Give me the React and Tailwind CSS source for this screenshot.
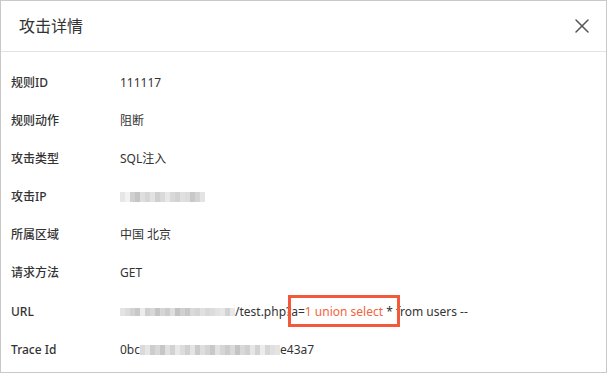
import React from 'react';
import { X } from 'lucide-react';

const font = { fontFamily: '"Noto Sans", "Noto Sans CJK SC", sans-serif' };

// pixelated blur blocks standing in for masked values
const Blur = ({ shades, h = 'h-[9px]', w = 'w-[5px]' }) => (
  <span className="inline-flex align-middle">
    {shades.map((s, i) => (
      <span key={i} className={`${w} ${h} inline-block`} style={{ backgroundColor: s }} />
    ))}
  </span>
);

const ipShades = ['#e6e6e6', '#f2f2f2', '#d0d0d0', '#c4c4c4', '#dedede', '#d6d6d6', '#e2e2e2', '#cfcfcf', '#dadada', '#e8e8e8', '#d8d8d8', '#d2d2d2', '#e0e0e0', '#dcdcdc', '#c8c8c8', '#d4d4d4', '#e4e4e4'];
const urlShades = ['#e4e4e4', '#dcdcdc', '#d2d2d2', '#c8c8c8', '#ececec', '#cfcfcf', '#d8d8d8', '#c4c4c4', '#d6d6d6', '#cccccc', '#dedede', '#c2c2c2', '#d0d0d0', '#c6c6c6', '#dadada', '#d4d4d4', '#e0e0e0', '#d8d8d8', '#dcdcdc', '#e2e2e2', '#e6e6e6', '#d2d2d2', '#e8e8e8'];
const traceShades = ['#dadada', '#e6e6e6', '#cdcdcd', '#d8d8d8', '#c6c6c6', '#e0e0e0', '#d2d2d2', '#e8e8e8', '#dcdcdc', '#d0d0d0', '#e4e4e4', '#cacaca', '#dedede', '#d4d4d4', '#c8c8c8', '#e2e2e2', '#d6d6d6', '#cccccc', '#dadada', '#c4c4c4', '#d8d8d8', '#cfcfcf', '#e6e6e6', '#d2d2d2', '#ececec', '#d6d6d6', '#e0e0e0', '#e4e4e4'];

const Row = ({ label, children, h = 'h-[38px]' }) => (
  <div className={`flex items-center ${h}`}>
    <div className="w-[109px] shrink-0 font-medium text-[#333]">{label}</div>
    <div className="text-[#333] flex items-center whitespace-nowrap">{children}</div>
  </div>
);

export default function App() {
  return (
    <div className="w-[607px] h-[375px] bg-white text-[12px]" style={font}>
      <div className="h-[373px] border border-[#c9c9c9] flex flex-col">
        {/* Header */}
        <div className="h-[51px] shrink-0 border-b border-[#e3e3e3] flex items-center justify-between pl-[18px] pr-[12px]">
          <span className="text-[16px] text-[#333]">攻击详情</span>
          <X className="w-[24px] h-[24px] text-[#555]" strokeWidth={1.5} />
        </div>

        {/* Body */}
        <div className="pt-[12px] pl-[10px]">
          <Row label="规则ID">111117</Row>
          <Row label="规则动作">阻断</Row>
          <Row label="攻击类型">SQL注入</Row>
          <Row label="攻击IP">
            <Blur shades={ipShades} h="h-[10px]" />
          </Row>
          <Row label="所属区域">中国 北京</Row>
          <Row label="请求方法">GET</Row>
          <Row label="URL" h="h-[39px]">
            <Blur shades={urlShades} h="h-[8px]" />
            <span>/test.php?</span>
            <span className="relative">
              a=<span className="text-[#f4643d]">1 union select </span>*&nbsp;
              <span className="absolute left-[-3px] right-[-4px] top-[-8px] bottom-[-6px] border-[3px] border-[#f1593a]" />
            </span>
            <span>from users --</span>
          </Row>
          <Row label="Trace Id">
            <span>0bc</span>
            <Blur shades={traceShades} h="h-[10px]" />
            <span>e43a7</span>
          </Row>
        </div>
      </div>
    </div>
  );
}
